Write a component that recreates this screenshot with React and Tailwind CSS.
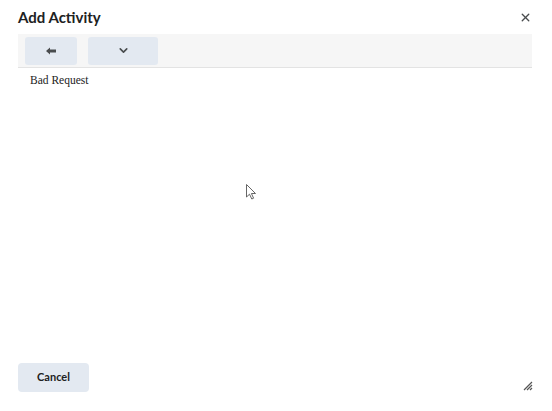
import { X, ChevronDown } from 'lucide-react';

export default function App() {
  return (
    <div className="relative w-[552px] h-[411px] bg-white flex flex-col overflow-hidden" style={{ fontFamily: 'Lato, "Open Sans", sans-serif' }}>
      {/* Header */}
      <div className="flex items-center justify-between pl-[18px] pr-[20px] h-[34px] pt-[1px]">
        <h1 className="text-[15px] font-bold text-[#202122]">Add Activity</h1>
        <button className="text-[#494c4e]">
          <X className="w-[13px] h-[13px]" strokeWidth={2.5} />
        </button>
      </div>

      {/* Toolbar */}
      <div className="mx-[18px] mr-[20px] h-[34px] bg-[#f6f6f6] border-b border-[#e3e3e3] flex items-center gap-[11px] pl-[7px]">
        <button className="w-[52px] h-[28px] bg-[#e3e9f1] rounded-[3px] flex items-center justify-center text-[#494c4e]">
          <svg width="10" height="8" viewBox="0 0 10 8">
            <path d="M0 4 L4 0.5 V2.5 H10 V5.5 H4 V7.5 Z" fill="#494c4e" />
          </svg>
        </button>
        <button className="w-[70px] h-[28px] bg-[#e3e9f1] rounded-[3px] flex items-center justify-center text-[#494c4e]">
          <ChevronDown className="w-[13px] h-[13px]" strokeWidth={3} />
        </button>
      </div>

      {/* Body */}
      <div className="flex-1 px-[30px] pt-[4px]">
        <p className="text-[11.5px] leading-[16px] text-[#222]" style={{ fontFamily: '"Liberation Serif", serif' }}>Bad Request</p>
      </div>

      {/* Footer */}
      <div className="flex items-end justify-between pl-[18px] pr-[19px] pb-[19px]">
        <button className="w-[71px] h-[29px] bg-[#e3e9f1] rounded-[4px] text-[11px] font-bold text-[#202122]">
          Cancel
        </button>
        <svg width="10" height="10" viewBox="0 0 10 10" className="mb-[1px]">
          <path d="M1 9 L9 1 M4 9 L9 4 M7 9 L9 7" stroke="#555" strokeWidth="1.2" />
        </svg>
      </div>

      {/* Mouse cursor */}
      <svg className="absolute left-[246px] top-[184px]" width="11" height="16" viewBox="0 0 11 16">
        <path d="M0.5 0.5 V13 L3.5 10.2 L5.8 15 L7.6 14.2 L5.4 9.5 H9.5 Z" fill="white" stroke="#555" strokeWidth="0.9" />
      </svg>
    </div>
  );
}
